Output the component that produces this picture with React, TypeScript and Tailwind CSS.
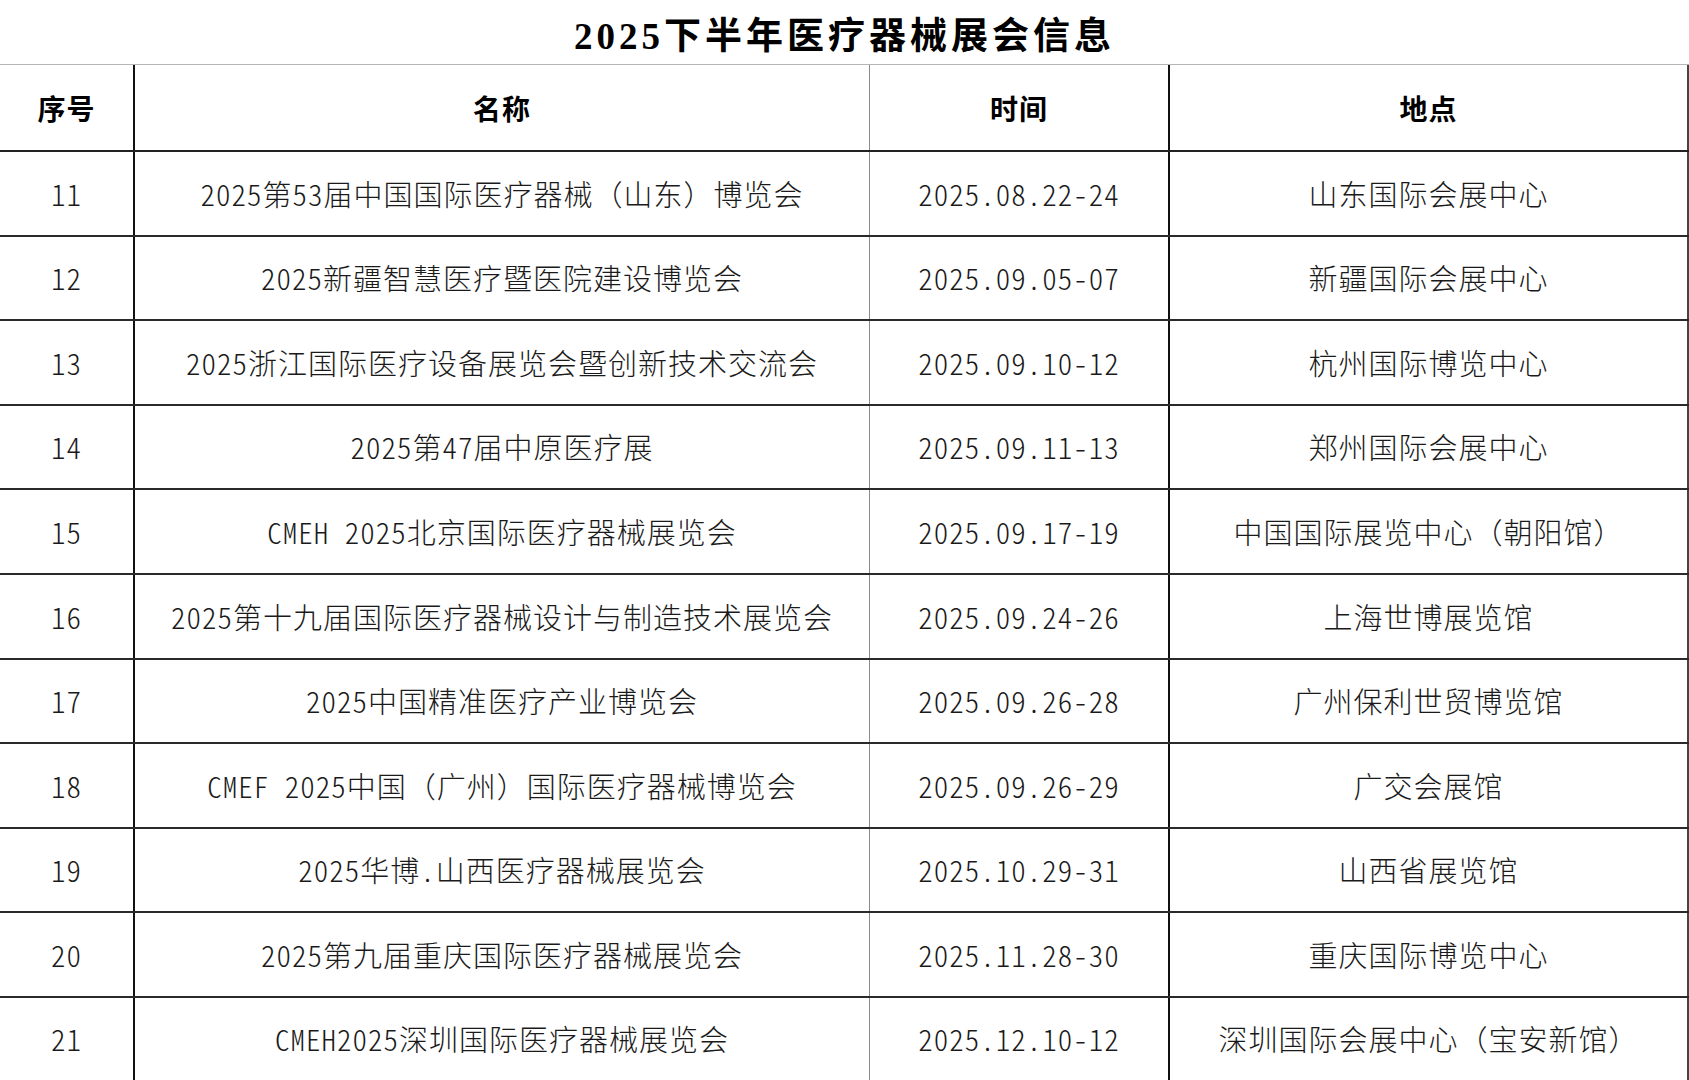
const rows = [
  { no: "11", name: "2025第53届中国国际医疗器械（山东）博览会", date: "2025.08.22-24", place: "山东国际会展中心" },
  { no: "12", name: "2025新疆智慧医疗暨医院建设博览会", date: "2025.09.05-07", place: "新疆国际会展中心" },
  { no: "13", name: "2025浙江国际医疗设备展览会暨创新技术交流会", date: "2025.09.10-12", place: "杭州国际博览中心" },
  { no: "14", name: "2025第47届中原医疗展", date: "2025.09.11-13", place: "郑州国际会展中心" },
  { no: "15", name: "CMEH 2025北京国际医疗器械展览会", date: "2025.09.17-19", place: "中国国际展览中心（朝阳馆）" },
  { no: "16", name: "2025第十九届国际医疗器械设计与制造技术展览会", date: "2025.09.24-26", place: "上海世博展览馆" },
  { no: "17", name: "2025中国精准医疗产业博览会", date: "2025.09.26-28", place: "广州保利世贸博览馆" },
  { no: "18", name: "CMEF 2025中国（广州）国际医疗器械博览会", date: "2025.09.26-29", place: "广交会展馆" },
  { no: "19", name: "2025华博.山西医疗器械展览会", date: "2025.10.29-31", place: "山西省展览馆" },
  { no: "20", name: "2025第九届重庆国际医疗器械展览会", date: "2025.11.28-30", place: "重庆国际博览中心" },
  { no: "21", name: "CMEH2025深圳国际医疗器械展览会", date: "2025.12.10-12", place: "深圳国际会展中心（宝安新馆）" },
];

const cjk = "[font-family:'Noto_Sans_CJK_SC',sans-serif] [font-feature-settings:'hwid']";

// keep full-width brackets full width, digits/latin half width
function Txt({ s }: { s: string }) {
  return (
    <>
      {s.split(/([（）])/).map((part, i) =>
        part === "（" || part === "）" ? (
          <span key={i} className="[font-feature-settings:normal]">{part}</span>
        ) : (
          part
        )
      )}
    </>
  );
}

export default function App() {
  return (
    <div className="w-[1689px] h-[1080px] overflow-hidden bg-white text-[#1a1a1a]">
      <div className="h-16 flex items-center justify-center pt-[8px]">
        <h1 className="text-[37px] leading-none font-bold tracking-[4px] text-black [font-family:'Liberation_Serif','Noto_Sans_CJK_SC',serif]">
          2025下半年医疗器械展会信息
        </h1>
      </div>

      <div className="border-t border-[#b5b5b5]">
        <div className={`flex h-[87px] border-b-2 border-[#222] font-bold text-[28px] tracking-[1px] text-black ${cjk}`}>
          <div className="w-[135px] border-r-2 border-[#111] flex items-center justify-center">序号</div>
          <div className="w-[735px] border-r border-[#8a8a8a] flex items-center justify-center">名称</div>
          <div className="w-[300px] border-r-2 border-[#111] flex items-center justify-center">时间</div>
          <div className="w-[519px] border-r-2 border-[#444] flex items-center justify-center">地点</div>
        </div>

        {rows.map((r) => (
          <div key={r.no} className={`flex h-[84.6px] border-b-2 border-[#2a2a2a] text-[29px] font-light tracking-[1px] ${cjk}`}>
            <div className="w-[135px] border-r-2 border-[#111] flex items-center justify-center">{r.no}</div>
            <div className="w-[735px] border-r border-[#8a8a8a] flex items-center justify-center whitespace-nowrap">
              <Txt s={r.name} />
            </div>
            <div className="w-[300px] border-r-2 border-[#111] flex items-center justify-center">{r.date}</div>
            <div className="w-[519px] border-r-2 border-[#444] flex items-center justify-center whitespace-nowrap">
              <Txt s={r.place} />
            </div>
          </div>
        ))}
      </div>
    </div>
  );
}
